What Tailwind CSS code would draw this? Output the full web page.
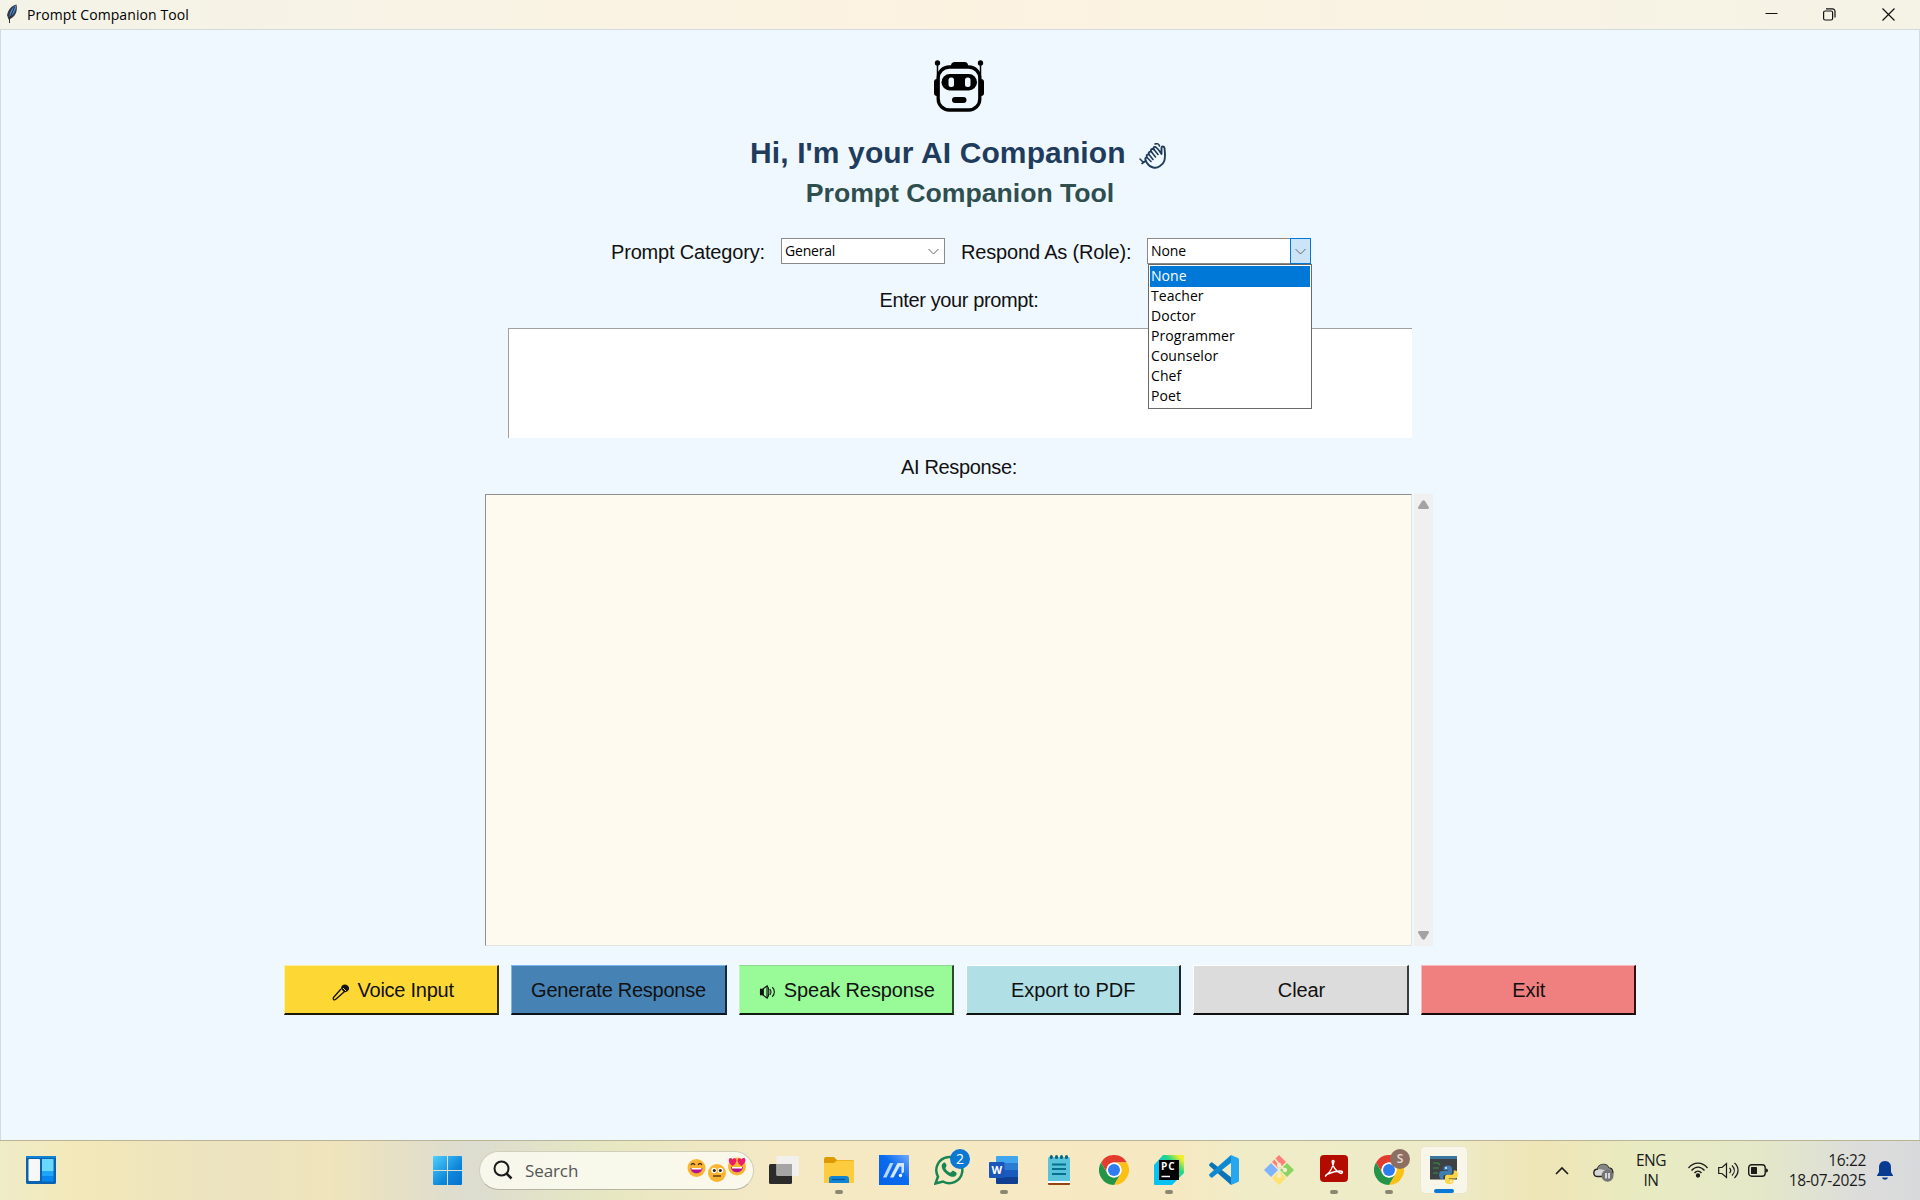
<!DOCTYPE html>
<html lang="en">
<head>
<meta charset="utf-8">
<title>Prompt Companion Tool</title>
<script src="https://cdn.jsdelivr.net/npm/@tailwindcss/browser@4"></script>
</head>
<body class="w-[1920px] h-[1200px] overflow-hidden flex flex-col bg-[#f0f8ff] text-black font-['Liberation_Sans',Arial,sans-serif]">
<svg class="hidden">
  <symbol id="chrome" viewBox="0 0 30 30">
    <circle cx="15" cy="15" r="15" fill="#fff"/>
    <path d="M2 7.500A15 15 0 0 1 28 7.500H15A7.500 7.500 0 0 0 8.500 18.750Z" fill="#e33b2e"/>
    <path d="M28 7.500A15 15 0 0 1 15 30L21.500 18.750A7.500 7.500 0 0 0 15 7.500Z" fill="#fdc116"/>
    <path d="M15 30A15 15 0 0 1 2 7.500L8.500 18.750A7.500 7.500 0 0 0 21.500 18.750Z" fill="#249447"/>
    <circle cx="15" cy="15" r="7.500" fill="#fff"/><circle cx="15" cy="15" r="6" fill="#2f7cee"/>
  </symbol>
</svg>

<header class="h-[29px] shrink-0 flex items-center bg-linear-to-r from-[#f4f3e8] via-[#fcf2e0] to-[#f5f3e6]">
  <svg class="w-3 h-5 ml-1.5 -mt-px" viewBox="0 0 12 20"><path d="M10.500.500C6 1 2 6 1 11l1.500 4.500L4 15c5-2 8-8 6.500-14.500Z" fill="#333a45"/><path d="M10 1.500C6 3.500 3.500 8 3.500 13c3.500-2 7-7 6.500-11.500Z" fill="#4b8ee0"/><path d="M8.500 3 3.500 15v4" stroke="#2a2a2a" fill="none"/></svg>
  <h1 class="ml-[9px] font-['Open_Sans',sans-serif] text-[14px] leading-[20px] tracking-[0.08px]">Prompt Companion Tool</h1>
  <div class="ml-auto flex items-center">
    <svg class="w-[13px] h-[13px] mr-[45px]" viewBox="0 0 13 13"><path d="M.500 5.500h12" stroke="#111"/></svg>
    <svg class="w-[13px] h-[13px] mr-[46px]" viewBox="0 0 13 13" fill="none" stroke="#111" stroke-width="1.200"><rect x=".600" y="3" width="9" height="9" rx="1.500"/><path d="M3 .900h6.500a2.500 2.500 0 0 1 2.500 2.500V9.500"/></svg>
    <svg class="w-[13px] h-[13px] mr-[25px]" viewBox="0 0 13 13"><path d="m.500.500 12 12m0-12-12 12" stroke="#111" stroke-width="1.200"/></svg>
  </div>
</header>

<main class="h-[1111px] shrink-0 border-t border-x border-[#d3dae1] bg-[#f0f8ff] pr-0.5 flex flex-col items-center">
  <svg class="w-[50px] h-[52px] mt-[30px]" viewBox="0 0 50 52">
    <path d="M3.500 3v20M46.500 3v20" stroke="#000" stroke-width="1.500"/>
    <circle cx="3.500" cy="3" r="2.700"/><circle cx="46.500" cy="3" r="2.700"/>
    <rect x="0" y="19" width="6" height="17" rx="3"/><rect x="44" y="19" width="6" height="17" rx="3"/>
    <path d="M17 6c0-3 1.500-4 4-4h9c3 0 4 1 4 4v2H17Z"/>
    <rect x="4.200" y="7" width="41.600" height="43" rx="11" fill="#f0f8ff" stroke="#000" stroke-width="3.300"/>
    <rect x="7.500" y="14" width="35.500" height="16.500" rx="8.200"/>
    <rect x="14.500" y="17.500" width="5.500" height="9.500" rx="2.500" fill="#f0f8ff"/><rect x="31" y="17.500" width="5.500" height="9.500" rx="2.500" fill="#f0f8ff"/>
    <rect x="18" y="37" width="14.500" height="6" rx="3"/>
  </svg>
  <div class="mt-[21px] h-10 w-[418px] flex items-center whitespace-nowrap text-[#1f3c5c]">
    <h2 class="w-[389px] shrink-0 text-[30px] leading-10 font-bold tracking-[0.12px]">Hi, I'm your AI Companion</h2>
    <svg class="w-[27px] h-[27px] mt-1.5" viewBox="0 0 27 27" fill="none" stroke="#1f3c5c" stroke-width="1.900" stroke-linecap="round" stroke-linejoin="round"><path d="M8 20c3 5 9 6 13 3 5-3 5-7 5-12l-.500-6c-.500-2-3-2-3 0V11c-2-3-4-6-6-7-2-.500-2.500 1-1.500 2.500C12.500 5 11 7 12.500 9c-2-1-3.500.500-2.500 2.500-2-.500-3 1-2 3C5.500 14.500 6 17 8 20Z"/><path d="m12.500 9 4 5M10 11.500l4 5M8 14.500l4 4M15 6.500l4 5M1 16l3 3 3-1M3 20.500l3-2M16 1c2-1 4 0 4.500 2" stroke-width="1.600"/></svg>
  </div>
  <h3 class="h-10 text-[26.67px] leading-10 font-bold text-[#2f4f4f] tracking-[-0.03px] translate-x-px">Prompt Companion Tool</h3>

  <div class="relative z-10 mt-[25px] h-7 w-[702px] flex items-start text-[20px] leading-7 whitespace-nowrap text-[#111] translate-x-[2px]">
    <label class="w-[171px] shrink-0 pl-px tracking-[-0.18px]">Prompt Category:</label>
    <div class="w-[164px] h-[26px] shrink-0 border border-[#8a8a8a] bg-white flex items-center justify-between pl-[3px] pr-[5px] font-['Open_Sans',sans-serif] text-[14px] leading-5 text-black">
      <span class="tracking-[-0.2px]">General</span>
      <svg class="w-[11px] h-[7px]" viewBox="0 0 11 7"><path d="m.500 1 5 5 5-5" fill="none" stroke="#666"/></svg>
    </div>
    <label class="w-[186px] shrink-0 ml-4 tracking-[-0.17px]">Respond As (Role):</label>
    <div class="relative w-[164px] h-[26px] shrink-0 border border-[#8a8a8a] bg-white flex items-center pl-[3px] font-['Open_Sans',sans-serif] text-[14px] leading-5 text-black">
      <span class="tracking-[-0.1px]">None</span>
      <span class="ml-auto -mr-px w-[21px] h-[26px] border border-[#0078d7] bg-[#cce4f7] flex items-center justify-center">
        <svg class="w-[11px] h-[7px]" viewBox="0 0 11 7"><path d="m.500 1 5 5 5-5" fill="none" stroke="#666"/></svg>
      </span>
      <ul class="absolute z-10 left-0 top-[25px] w-[164px] h-[145px] border border-[#6a6a6a] bg-white p-px leading-5 tracking-[0.06px]">
        <li class="h-[21px] -mb-px pl-px bg-[#0078d7] text-white">None</li>
        <li class="h-5 pl-px">Teacher</li>
        <li class="h-5 pl-px">Doctor</li>
        <li class="h-5 pl-px">Programmer</li>
        <li class="h-5 pl-px">Counselor</li>
        <li class="h-5 pl-px">Chef</li>
        <li class="h-5 pl-px">Poet</li>
      </ul>
    </div>
  </div>

  <label class="mt-[20px] h-7 text-[20px] leading-7 text-[#111] tracking-[-0.38px]">Enter your prompt:</label>
  <div class="mt-[14px] w-[904px] h-[110px] bg-white border-t border-l border-[#a0a0a0] translate-x-px"></div>
  <label class="mt-[15px] h-7 text-[20px] leading-7 text-[#111] tracking-[-0.35px]">AI Response:</label>
  <div class="mt-[13px] h-[452px] w-[948px] flex gap-0.5">
    <div class="w-[927px] bg-[#fffaf0] border border-t-[#8f8f8f] border-l-[#8f8f8f] border-r-[#e3e3e3] border-b-[#e3e3e3]"></div>
    <div class="w-[19px] bg-[#f0f0f0] flex flex-col items-center justify-between py-[6px]">
      <svg class="w-[11px] h-[9px]" viewBox="0 0 11 9"><path d="M4 1q1.500-1.500 3 0l4 6.500q0 1.500-1 1.500H1Q0 9 0 7.500Z" fill="#a3a3a3"/></svg>
      <svg class="w-[11px] h-[9px]" viewBox="0 0 11 9"><path d="M4 8q1.500 1.500 3 0l4-6.500Q11 0 10 0H1Q0 0 0 1.500Z" fill="#a3a3a3"/></svg>
    </div>
  </div>

  <div class="mt-[19px] h-[50px] w-[1352px] grid grid-cols-6 gap-3 text-[20px] whitespace-nowrap text-[#111] tracking-[-0.1px] translate-x-px">
    <button class="flex items-center justify-center gap-2 pl-[3px] bg-[#fdd835] border-t border-l border-t-[#fff0a0] border-l-[#fff0a0] border-r-2 border-b-2 border-r-[#3a3210] border-b-[#1c1808] tracking-[-0.25px]">
      <svg class="w-[18px] h-[18px] mt-1" viewBox="0 0 18 18"><path d="M9 6 1.500 14.500c-1 1.500.500 3 2 2L12 9" fill="none" stroke="#111" stroke-width="1.300"/><path d="M9 5.500C9 2 13 .500 15.500 2.500s2.500 6-3.500 7Z" fill="#111"/><path d="m11 5 3 3" stroke="#fdd835"/></svg>
      Voice Input</button>
    <button class="flex items-center justify-center bg-[#4682b4] border-t border-l border-t-[#7fb4ee] border-l-[#7fb4ee] border-r-2 border-b-2 border-r-[#15293a] border-b-[#0a141c] tracking-[-0.25px]">Generate Response</button>
    <button class="flex items-center justify-center gap-2 pl-0.5 bg-[#98fb98] border-t border-l border-t-[#8fd88f] border-l-[#c8f0c8] border-r-2 border-b-2 border-r-[#2c4a2c] border-b-[#101c10]">
      <svg class="w-[17px] h-[16px] mt-1" viewBox="0 0 18 16"><path d="M1 4.500h3.500v7H1Z" fill="#111"/><path d="M4.500 4.500 8.500 1.500v13l-4-3Z" fill="none" stroke="#111" stroke-width="1.200"/><path d="M8.500 2c2.500 1 2.500 11 0 12M11.500 5c1.500 1.500 1.500 4.500 0 6M14 3c3 2.500 3 7.500 0 10" fill="none" stroke="#111" stroke-width="1.200"/></svg>
      Speak Response</button>
    <button class="flex items-center justify-center bg-[#b0e0e6] border-t border-l border-white border-r-2 border-b-2 border-r-[#1d2729] border-b-[#0e1314]">Export to PDF</button>
    <button class="flex items-center justify-center pl-0.5 bg-[#dcdcdc] border-t border-l border-white border-r-2 border-b-2 border-r-[#3c3c3c] border-b-[#111111]">Clear</button>
    <button class="flex items-center justify-center pl-0.5 bg-[#f08080] border-t border-l border-t-[#ffb8b8] border-l-[#ffb8b8] border-r-2 border-b-2 border-r-[#2a1414] border-b-[#180a0a]">Exit</button>
  </div>
</main>

<footer class="h-[60px] shrink-0 border-t border-[#b9b398] pb-px flex items-center text-[#1b1b1b] font-['Open_Sans',sans-serif] bg-[linear-gradient(90deg,#f0ecc8_0,#f3e8b8_80px,#ece3c0_220px,#efe4bb_330px,#dcdcd0_470px,#e6e7c2_600px,#f5e9c4_780px,#f6e9c2_1180px,#f0ecc8_1250px,#edebc8_1440px,#efe5b6_1540px,#e8ebc2_1650px,#e4e8c8_1760px,#dcdddb_1860px,#d8d9da_1920px)]">
  <svg class="w-[30px] h-[28px] ml-[26px]" viewBox="0 0 30 28"><rect width="30" height="28" rx="1.500" fill="#0b62b0"/><path d="M0 1h30" stroke="#0f82d4" stroke-width="2"/><rect x="2.500" y="3" width="11.500" height="22" rx="1" fill="#f7f7f8"/><rect x="16" y="3" width="11.500" height="12" fill="#68d8ff"/><rect x="16" y="15" width="11.500" height="5.500" fill="#1fa4fb"/><rect x="16" y="20.500" width="11.500" height="5" fill="#0586f0"/></svg>
  <svg class="w-[29px] h-[29px] ml-[377px]" viewBox="0 0 29 29"><defs><linearGradient id="win" x2="1" y2="1"><stop stop-color="#4fd0fc"/><stop offset=".6" stop-color="#0f87da"/><stop offset="1" stop-color="#0572d0"/></linearGradient></defs><path d="M0 1q0-1 1-1h13v14H0ZM15 0h13q1 0 1 1v13H15ZM0 15h14v14H1q-1 0-1-1ZM15 15h14v13q0 1-1 1H15Z" fill="url(#win)"/></svg>
  <div class="ml-[17px] w-[275px] h-[39px] rounded-full border border-[#d0cfbc] border-b-[#b5b3a2] bg-[#faf9f0]/90 flex items-center pl-[13px] pr-[6px]">
    <svg class="w-5 h-5" viewBox="0 0 20 20" fill="none" stroke="#1b1b1b" stroke-width="2"><circle cx="8.500" cy="8.500" r="7"/><path d="m13.500 13.500 5 5" stroke-width="2.500"/></svg>
    <span class="ml-[12px] mt-0.5 text-[17px] leading-6 text-[#555] tracking-[-0.1px]">Search</span>
    <svg class="ml-auto w-[60px] h-[26px]" viewBox="0 0 60 26">
      <g fill="#f9b531"><circle cx="9.500" cy="11" r="9"/><circle cx="30" cy="16" r="9"/><circle cx="50" cy="9.500" r="9"/></g>
      <path d="M3.500 11h12c-.500 7-11.500 7-12 0ZM44 10h12c-.500 7-11.500 7-12 0Z" fill="#b5128d"/><path d="M4.500 11h10v1.500h-10ZM45 10h10v1.500H45Z" fill="#fff"/>
      <path d="M4 8q2-3 4 0m3 0q2-3 4 0" stroke="#4a2b10" fill="none" stroke-width="1.300"/>
      <g fill="#fff"><circle cx="27" cy="13.500" r="2.700"/><circle cx="33.500" cy="13.500" r="2.700"/></g><g fill="#352013"><circle cx="27.300" cy="13.500" r="1.500"/><circle cx="33.300" cy="13.500" r="1.500"/></g><path d="M26 19h8" stroke="#5a3310" stroke-width="1.400"/>
      <path d="M45.500 9C41 6 41 1 43.500 1q1.500 0 2 1.500Q47 .500 48.500 1.500C50.500 3 49 7 45.500 9ZM54.500 9C51 7 49.500 3 51.500 1.500q1.500-1 3 1Q55 .500 57 1c2.500.500 2 5-2.500 8Z" fill="#ed1c68"/>
    </svg>
  </div>

  <nav class="ml-[2px] flex items-center h-full">
    <div class="w-[55px] flex justify-center"><svg class="w-[30px] h-[28px]" viewBox="0 0 30 28"><rect y="8" width="23" height="20" rx="1.500" fill="#2b2b2b"/><rect x="7.500" width="22.500" height="20" rx="1.500" fill="#f0f0f0" opacity=".92"/><path d="M7.500 8H23v12H9q-1.500 0-1.500-1.500Z" fill="#a5a5a5"/></svg></div>
    <div class="relative w-[55px] flex justify-center"><svg class="w-[30px] h-[27px]" viewBox="0 0 30 27"><path d="M0 2Q0 0 2 0h8l3 3h15q2 0 2 2v5H0Z" fill="#dc9a05"/><path d="M0 6h10l3-2.500h15q2 0 2 2V26H0Z" fill="#fdcb3e"/><path d="M5 26v-4q0-3 3-3h14q3 0 3 3v4Z" fill="#1284d4"/><path d="M8 22.500h13" stroke="#0757a0" stroke-width="1.300"/></svg><i class="absolute -bottom-[10px] w-2 h-1 rounded-full bg-[#8b8670]"></i></div>
    <div class="w-[55px] flex justify-center"><svg class="w-[30px] h-[30px]" viewBox="0 0 30 30"><defs><linearGradient id="ma" x1="1" x2="0" y2="1"><stop stop-color="#70aaff"/><stop offset=".45" stop-color="#0a6bee"/><stop offset="1" stop-color="#0562e8"/></linearGradient></defs><path fill="url(#ma)" d="M0 0h30v30H0z"/><path d="M4 22.500 11 8h3.500L7.500 22.500Z" fill="#b8d6ff"/><path d="M11 22.500 18.500 8H25v9l-2.500 2V11.500h-2L14.500 22.500Z" fill="#d5e7ff"/><circle cx="21.500" cy="20.500" r="1.700" fill="#fff"/></svg></div>
    <div class="relative w-[55px] flex justify-center"><svg class="w-[30px] h-[30px]" viewBox="0 0 30 30"><path d="M1.500 28.500 4 21.500A13 13 0 1 1 9 26.500Z" fill="none" stroke="#178653" stroke-width="2.500"/><path d="M10 7.500c-4 2-2.500 7 2 11 4.500 4 9 4.500 10.500 1 .500-1.500 0-1.800-1-2.500-3-2-3-1.500-4.500.300-.600.600-1.200.300-2.500-.600-3-2.300-3.500-3.500-2.500-4.700 1-1 .500-2-.300-3.500-.600-1.200-1-1.200-1.700-1Z" fill="#178653"/></svg><b class="absolute left-[29px] -top-[6px] w-5 h-5 rounded-full bg-[#0b78d3] text-white text-[14px] leading-5 text-center font-normal">2</b></div>
    <div class="relative w-[55px] flex justify-center"><svg class="w-[30px] h-[28px]" viewBox="0 0 30 28"><path d="M7 1q0-1 1-1h20q1 0 1 1v6H7Z" fill="#41a5ee"/><path d="M7 7h22v7H7Z" fill="#2b7cd3"/><path d="M7 14h22v7H7Z" fill="#185abd"/><path d="M7 21h22v6q0 1-1 1H8q-1 0-1-1Z" fill="#103f91"/><rect y="6" width="15.500" height="16" rx="1" fill="#1a56b8"/><text x="7.700" y="18" text-anchor="middle" font-family="Open Sans,sans-serif" font-weight="700" font-size="11" fill="#fff">W</text></svg><i class="absolute -bottom-[10px] w-2 h-1 rounded-full bg-[#8b8670]"></i></div>
    <div class="w-[55px] flex justify-center"><svg class="w-[22px] h-[30px]" viewBox="0 0 22 30"><rect y="2" width="22" height="26" rx="1.500" fill="#5ac3dc"/><path d="M0 26h22v2H0Z" fill="#fff"/><path d="M0 28h22v1q0 1-1 1H1q-1 0-1-1Z" fill="#96430d"/><path d="M4 9.500h14M4 14h14M4 19h14" stroke="#07708f" stroke-width="1.800"/><g fill="#0b6480"><rect x="1.800" width="3" height="4" rx="1.500"/><rect x="7" width="3" height="4" rx="1.500"/><rect x="12" width="3" height="4" rx="1.500"/><rect x="17" width="3" height="4" rx="1.500"/></g></svg></div>
    <div class="w-[55px] flex justify-center"><svg class="w-[30px] h-[30px]"><use href="#chrome"/></svg></div>
    <div class="relative w-[55px] flex justify-center"><svg class="w-[30px] h-[30px]" viewBox="0 0 30 30"><defs><linearGradient id="pc" x1="0" y1="1" x2="1" y2="0"><stop offset=".4" stop-color="#07c3f2"/><stop offset=".68" stop-color="#21d789"/><stop offset=".9" stop-color="#f4ee2a"/></linearGradient></defs><path d="M0 10 9 0h20q1 0 1 1v17L18 30H1q-1 0-1-1Z" fill="url(#pc)"/><path d="M5 5h20v20H5Z"/><text x="7" y="15" textLength="13.500" font-family="Open Sans,sans-serif" font-weight="700" font-size="10" fill="#fff">PC</text><path d="M7.500 21.500h8.500" stroke="#fff" stroke-width="1.500"/></svg><i class="absolute -bottom-[9px] w-2 h-1 rounded-full bg-[#8b8670]"></i></div>
    <div class="w-[55px] flex justify-center"><svg class="w-[30px] h-[30px]" viewBox="0 0 30 30"><path d="M2 7.500Q3 7 4 8l19 15-1 7L.500 11q-.800-1 0-2Z" fill="#0b74b9"/><path d="M2 22.500Q3 23 4 22L23 7 22 0 .500 19q-.800 1 0 2Z" fill="#0f8ad2"/><path d="M22 0 29 3q1 .500 1 1.500v21q0 1-1 1.500l-7 3Z" fill="#27a7f0"/></svg></div>
    <div class="w-[55px] flex justify-center"><svg class="w-[30px] h-[30px]" viewBox="0 0 30 30"><path d="M15 0 22 7l-7 7-7-7Z" fill="#ff7f7a"/><path d="m7 8 7 7-7 7-7-7Z" fill="#80b3ff"/><path d="m23 8 7 7-7 7-7-7Z" fill="#88d45f"/><path d="m15 16 7 7-7 7-7-7Z" fill="#ffe171"/><path d="m11 4 4 5v12M15 10l6 5" stroke="#f3edcf" stroke-width="1.700" fill="none"/><g fill="#f3edcf"><circle cx="15" cy="10" r="2.200"/><circle cx="15" cy="21" r="2.200"/><circle cx="21" cy="15" r="2.200"/></g></svg></div>
    <div class="relative w-[55px] flex justify-center"><svg class="w-[28px] h-[28px] -mt-0.5" viewBox="0 0 28 28"><rect width="28" height="27" rx="4" fill="#b30b00"/><path d="M6 20.500c2.500-2 7-7.500 8-14 0-1.500-1.800-1.500-1.800 0 0 4.500 4 10 8 11.500 3 .800 3-2 0-2-5 0-9 1.500-12.500 3-2.500 1.500-2.500 3-1.700 1.500Z" fill="none" stroke="#fff" stroke-width="1.500"/></svg><i class="absolute -bottom-[11px] w-2 h-1 rounded-full bg-[#8b8670]"></i></div>
    <div class="relative w-[55px] flex justify-center"><svg class="w-[30px] h-[30px]"><use href="#chrome"/></svg><b class="absolute left-[29px] -top-[6px] w-5 h-5 rounded-full bg-[#8d6e63] text-[#e5dad6] text-[12px] leading-5 text-center font-semibold">S</b><i class="absolute -bottom-[9px] w-2 h-1 rounded-full bg-[#8b8670]"></i></div>
    <div class="relative ml-[3.500px] w-12 h-12 rounded-[5px] border border-[#ebe6cf] bg-[#f8f6e8] flex justify-center"><svg class="w-[28px] h-[28px] mt-[9px]" viewBox="0 0 28 28"><path d="M0 1h27v22.500H0Z" fill="#3d4143"/><path d="M0 0h27v3H0Z" fill="#3b78a0"/><path d="M3 7h5l2 2M3 12h6M3 17h5" stroke="#329345" stroke-width="1.200" fill="none"/><path d="M18 9.500c-3.500 0-4.500 1-4.500 3v1.700h4.700v.800h-6.500c-3.500 0-3.500 8 0 8h1.600v-2.300q0-2 2-2h4.500q2.200 0 2.200-2.200v-4c0-2-1.500-3-4-3Z" fill="#3f7db3"/><path d="M19 28c3.500 0 4.500-1 4.500-3v-1.700h-4.700v-.800h6.500c3.500 0 3.500-8 0-8h-1.600v2.300q0 2-2 2h-4.500q-2.200 0-2.200 2.200v4c0 2 1.500 3 4 3Z" fill="#fdd443"/><circle cx="16" cy="12" r=".900" fill="#fff"/><circle cx="21" cy="25.500" r=".900" fill="#fff"/></svg><i class="absolute bottom-0 w-5 h-1 rounded-full bg-[#0b78d3]"></i></div>
  </nav>

  <div class="ml-auto mr-[27px] flex items-center text-[15.500px] leading-5 whitespace-nowrap">
    <svg class="w-[14px] h-[9px] mr-px" viewBox="0 0 14 9"><path d="m1 8 6-6 6 6" fill="none" stroke="#1b1b1b" stroke-width="1.600"/></svg>
    <svg class="w-[21px] h-[19px] ml-[23px] mt-1" viewBox="0 0 21 19"><path d="M5 13.500C-.500 13.500-.500 6.500 4.500 6 6 0 14 0 15.500 5c5 0 6 7.500 1 8.500Z" fill="#d6d6d6" stroke="#222" stroke-width="1.400"/><path d="M4.500 6C6 0 14 0 15.500 5c3 .500 4 3 3.500 5-5 0-6-4-14.500-4Z" fill="#858585"/><circle cx="14.500" cy="12.800" r="6" fill="#747474"/><path d="M13 10v5.500M16 10v5.500" stroke="#fff" stroke-width="1.400"/></svg>
    <div class="ml-[20px] w-[34px] text-center tracking-[-0.5px]">ENG<br>IN</div>
    <svg class="w-5 h-4 ml-[20px]" viewBox="0 0 20 16" fill="none" stroke="#1b1b1b" stroke-width="1.300"><path d="M.500 6C6-.500 14-.500 19.500 6M3.500 8.500c4-4.500 9-4.500 13 0M6.500 11c2-2.500 5-2.500 7 0"/><circle cx="10" cy="13.500" r="1.500" fill="#1b1b1b"/></svg>
    <svg class="w-[21px] h-[17px] ml-[10px]" viewBox="0 0 21 17" fill="none" stroke="#1b1b1b" stroke-width="1.200"><path d="M.700 5.500H4L8.500 1.500v14L4 11.500H.700Z"/><path d="M11.500 6c1.500 1.500 1.500 3.500 0 5M14 3.500c3 3 3 7 0 10M16.500 1c5 4.500 4.500 10.500 0 15"/></svg>
    <svg class="w-[20px] h-[13px] ml-[9px]" viewBox="0 0 20 13"><rect x=".700" y=".700" width="16.500" height="11.500" rx="3" fill="none" stroke="#1b1b1b" stroke-width="1.400"/><rect x="3" y="3" width="6" height="7" rx=".500" fill="#1b1b1b"/><path d="M18 4.500q2 0 2 2t-2 2Z" fill="#1b1b1b"/></svg>
    <div class="ml-[18px] w-[80px] -mt-px flex flex-col items-end tracking-[-0.36px]"><span>16:22</span><span>18-07-2025</span></div>
    <svg class="w-4 h-[19px] ml-[11px]" viewBox="0 0 16 19"><path d="M8 0c4 0 6 3 6 6v5l2 3.500V15H0v-.500L2 11V6c0-3 2-6 6-6ZM5 16.500h6c-1 3-5 3-6 0Z" fill="#053c92"/></svg>
  </div>
</footer>
</body>
</html>
